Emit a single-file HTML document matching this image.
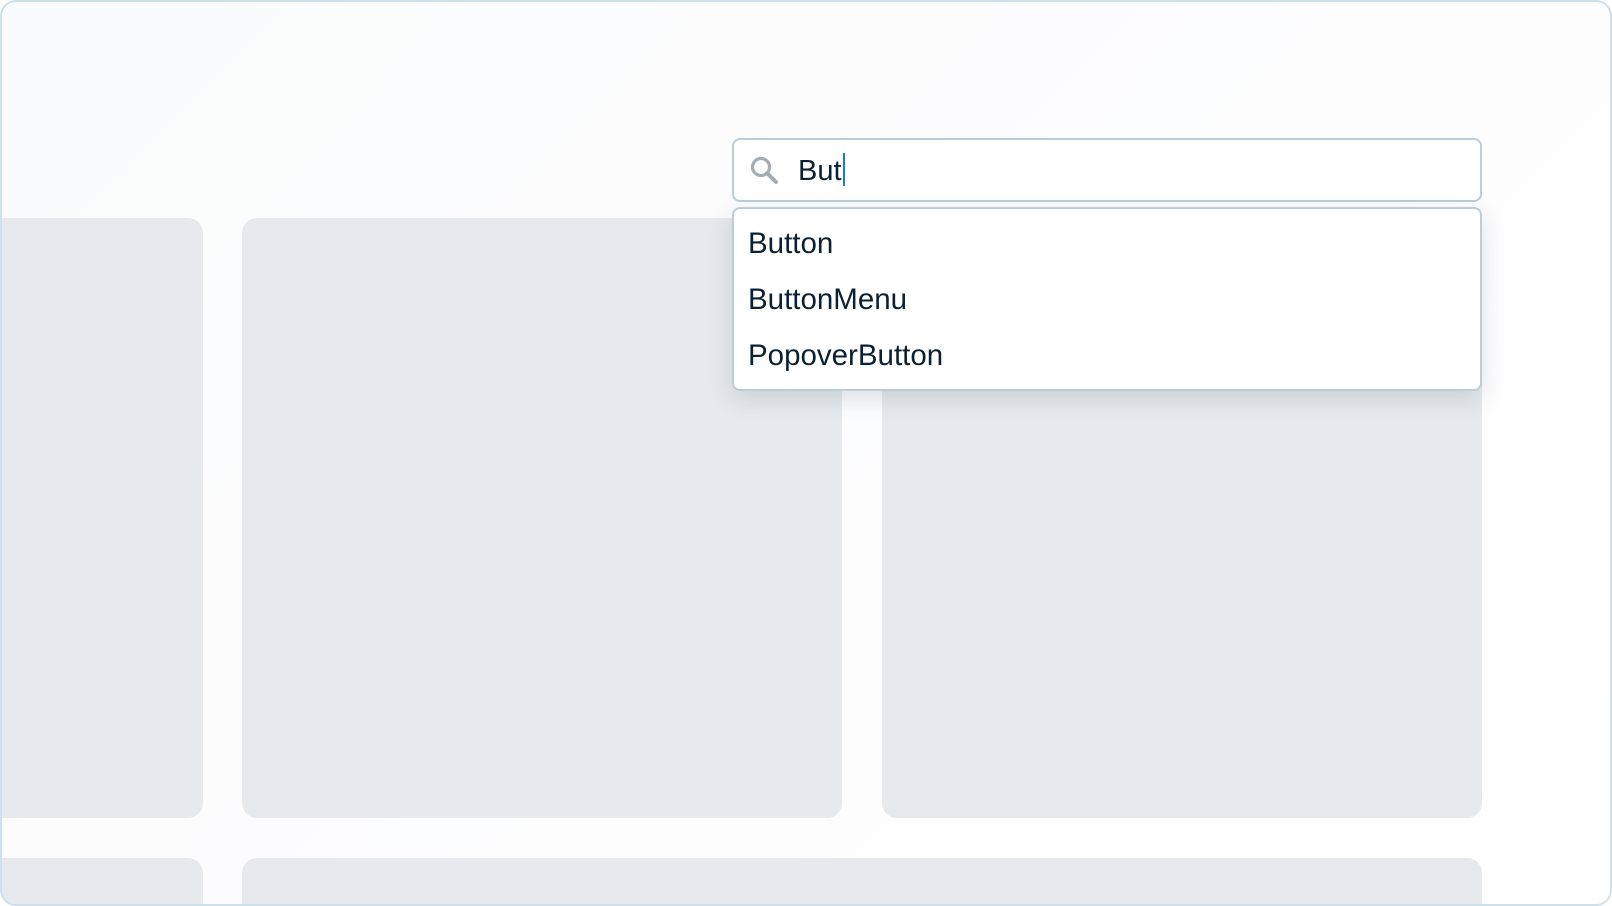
<!DOCTYPE html>
<html><head><style>
html,body{margin:0;padding:0;}
body{width:1612px;height:906px;overflow:hidden;background:#fff;font-family:"Liberation Sans",sans-serif;position:relative;}
.frame{position:absolute;left:0;top:0;width:1608px;height:902px;border:2px solid #cfe0ea;border-radius:16px;overflow:hidden;background:linear-gradient(135deg,#fafbfc 0%,#fdfdfe 60%,#fff 100%);}
.card{position:absolute;background:#e6eaed;border-radius:15px;}
.search{position:absolute;left:730px;top:136px;width:746px;height:60px;border:2px solid #bccdd8;border-radius:8px;background:#fff;}
.search .t{position:absolute;left:64px;top:13px;font-size:29px;color:#0a2133;}
.caret{display:inline-block;width:2px;height:33px;background:#1a7ad0;vertical-align:-6px;margin-left:1px;}
.dd{position:absolute;left:730px;top:205px;width:746px;height:180px;border:2px solid #bccdd8;border-radius:8px;background:#fff;box-shadow:0 8px 24px rgba(40,60,80,.15);}
.dd div{position:absolute;left:14px;font-size:29.5px;color:#0a2133;}
</style></head><body>
<div class="frame">
<div class="card" style="left:-20px;top:216px;width:221px;height:600px"></div>
<div class="card" style="left:240px;top:216px;width:600px;height:600px"></div>
<div class="card" style="left:880px;top:216px;width:600px;height:600px"></div>
<div class="card" style="left:-20px;top:856px;width:221px;height:60px"></div>
<div class="card" style="left:240px;top:856px;width:1240px;height:60px"></div>
<div class="search">
<svg style="position:absolute;left:15px;top:15px" width="30" height="30" viewBox="0 0 30 30"><circle cx="12" cy="12" r="8.5" fill="none" stroke="#a3adb5" stroke-width="3.2"/><line x1="18.5" y1="18.5" x2="27" y2="27" stroke="#a3adb5" stroke-width="4" stroke-linecap="round"/></svg>
<div class="t">But<span class="caret"></span></div>
</div>
<div class="dd">
<div style="top:18px">Button</div>
<div style="top:74px">ButtonMenu</div>
<div style="top:130px">PopoverButton</div>
</div>
</div>
</body></html>
